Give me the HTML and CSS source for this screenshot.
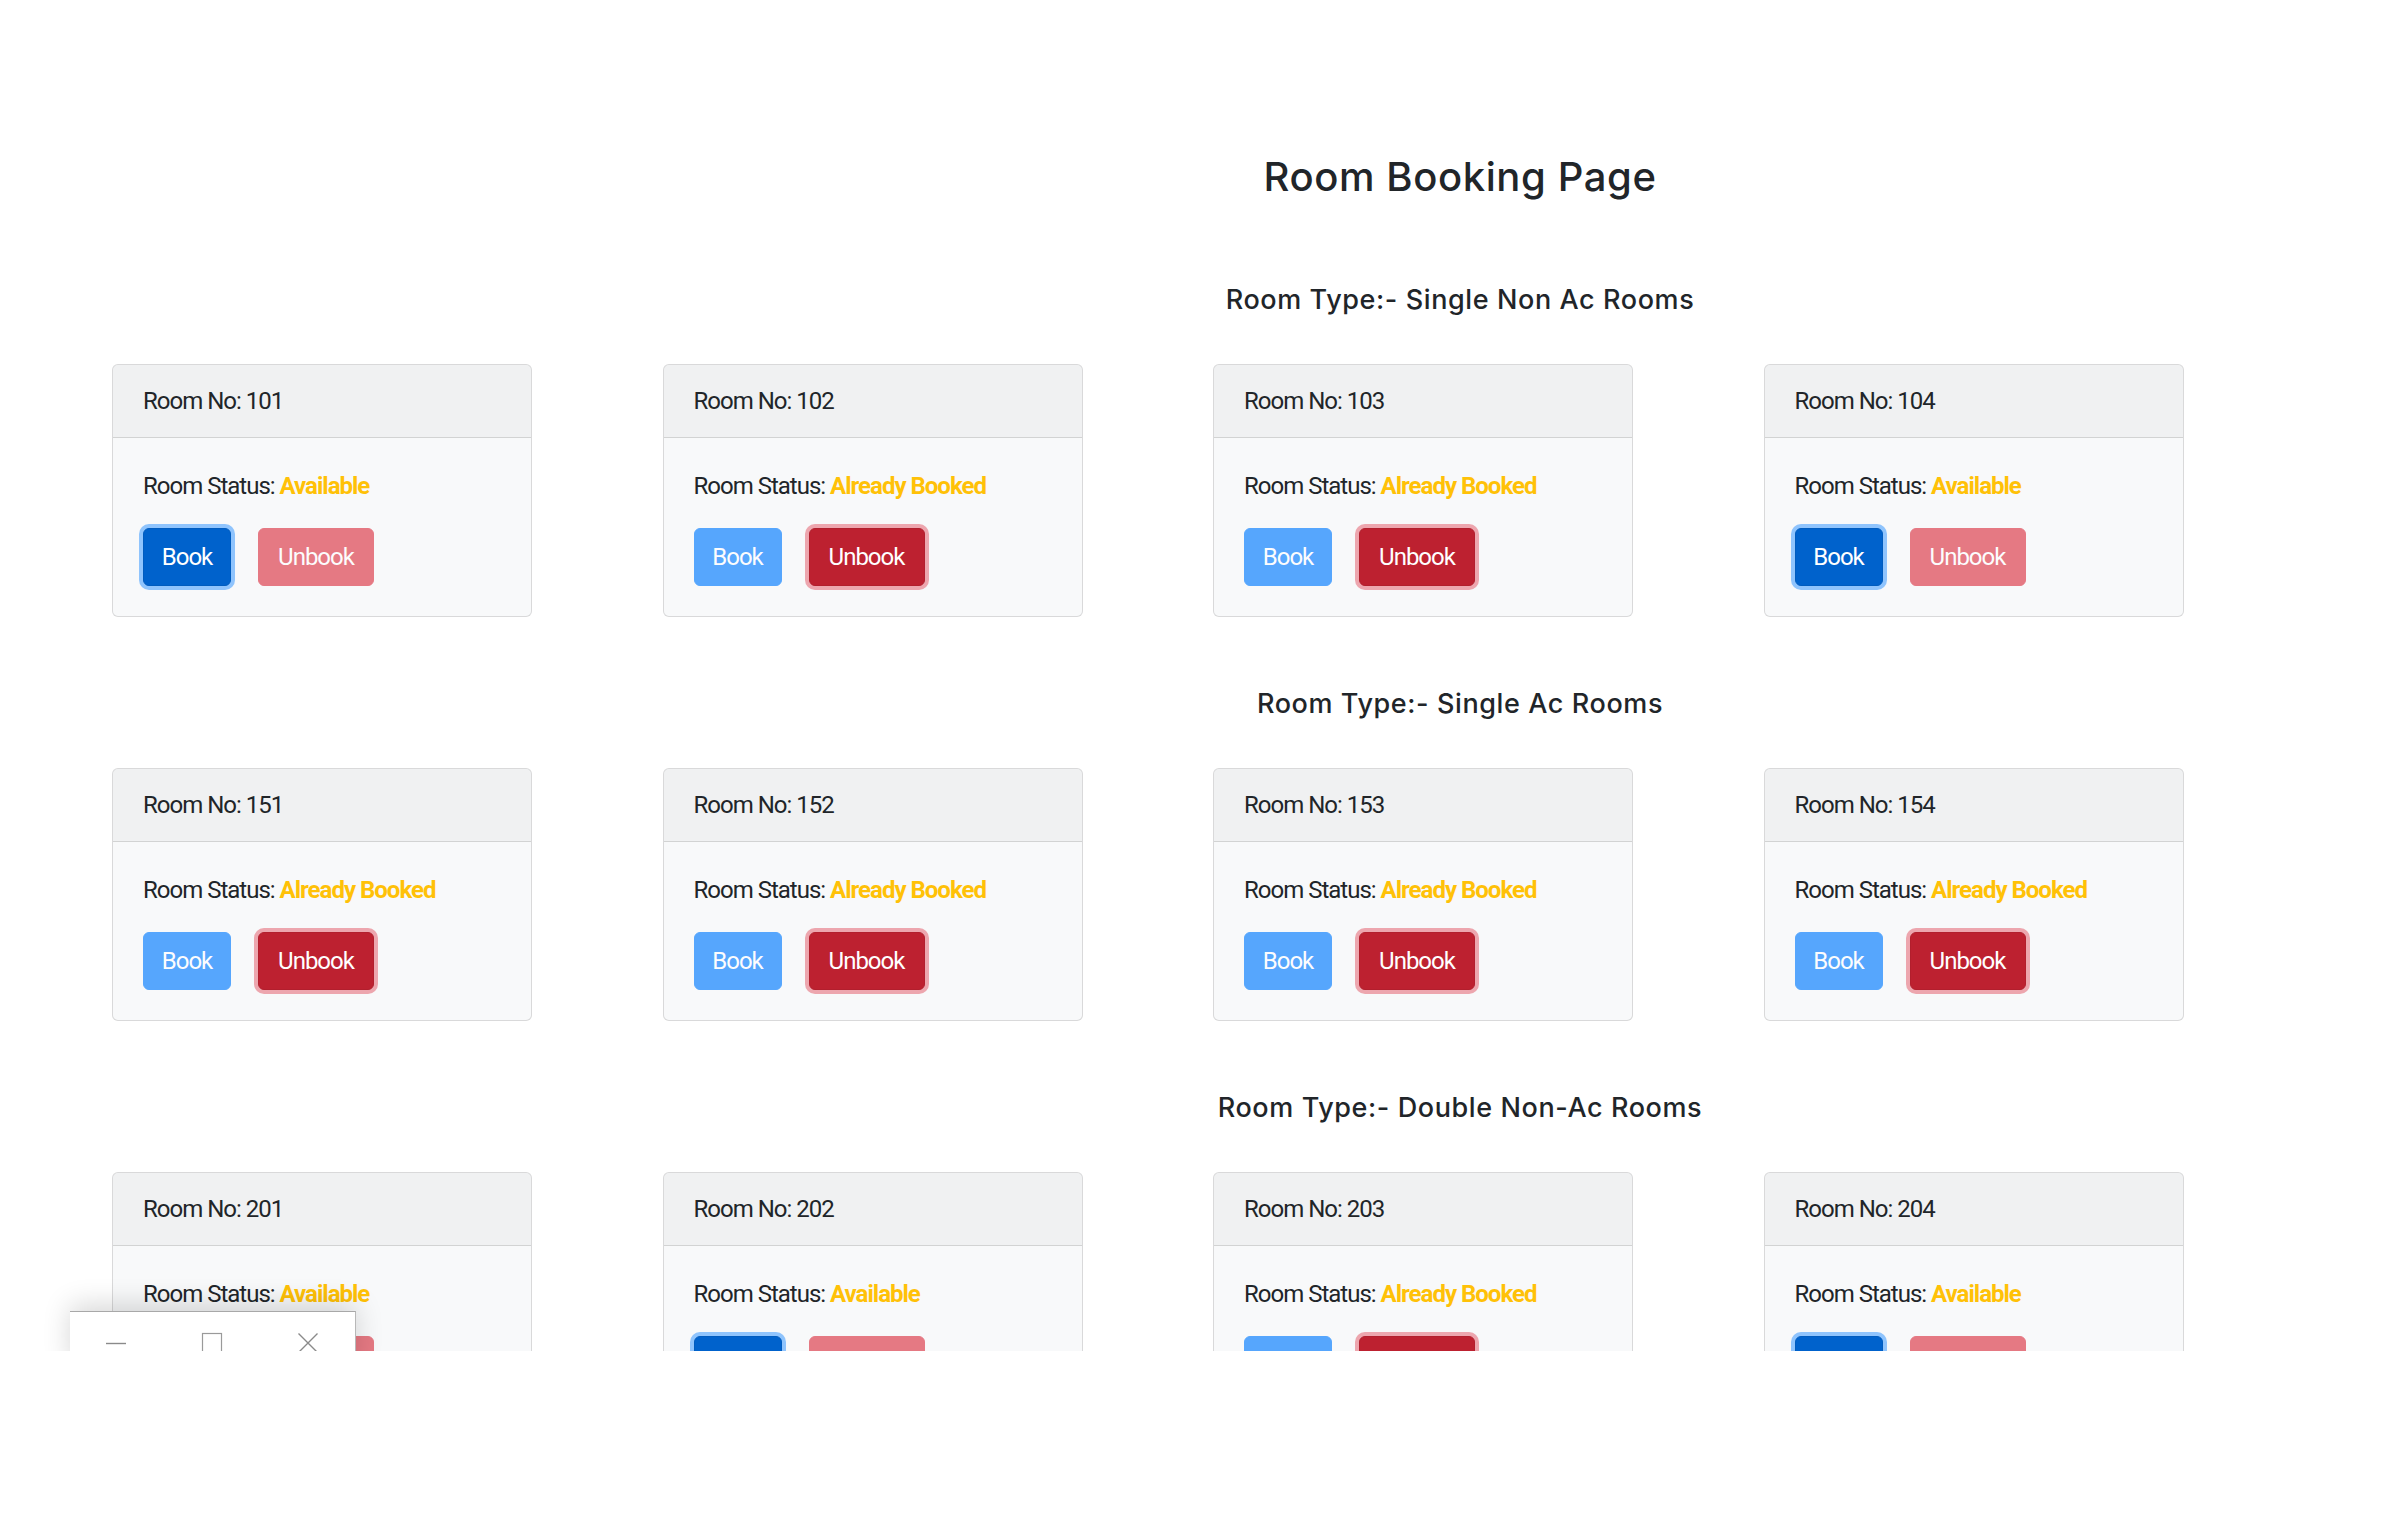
FILE: index.html
```html
<!DOCTYPE html>
<html lang="en">
<head>
<meta charset="utf-8">
<title>Room Booking Page</title>
<link rel="stylesheet" href="styles.css">
</head>
<body>
<div class="screen">
  <div class="page">
    <h2 class="title">Room Booking Page</h2>

    <section class="section">
      <h5 class="section-title">Room Type:- Single Non Ac Rooms</h5>
      <div class="rooms">
        <div class="card"><div class="card-header">Room No: 101</div><div class="card-body"><p class="status">Room Status: <b class="state">Available</b></p><div class="actions"><button class="btn btn-book is-active">Book</button><button class="btn btn-unbook is-disabled">Unbook</button></div></div></div>
        <div class="card"><div class="card-header">Room No: 102</div><div class="card-body"><p class="status">Room Status: <b class="state">Already Booked</b></p><div class="actions"><button class="btn btn-book is-disabled">Book</button><button class="btn btn-unbook is-active">Unbook</button></div></div></div>
        <div class="card"><div class="card-header">Room No: 103</div><div class="card-body"><p class="status">Room Status: <b class="state">Already Booked</b></p><div class="actions"><button class="btn btn-book is-disabled">Book</button><button class="btn btn-unbook is-active">Unbook</button></div></div></div>
        <div class="card"><div class="card-header">Room No: 104</div><div class="card-body"><p class="status">Room Status: <b class="state">Available</b></p><div class="actions"><button class="btn btn-book is-active">Book</button><button class="btn btn-unbook is-disabled">Unbook</button></div></div></div>
      </div>
    </section>

    <section class="section">
      <h5 class="section-title">Room Type:- Single Ac Rooms</h5>
      <div class="rooms">
        <div class="card"><div class="card-header">Room No: 151</div><div class="card-body"><p class="status">Room Status: <b class="state">Already Booked</b></p><div class="actions"><button class="btn btn-book is-disabled">Book</button><button class="btn btn-unbook is-active">Unbook</button></div></div></div>
        <div class="card"><div class="card-header">Room No: 152</div><div class="card-body"><p class="status">Room Status: <b class="state">Already Booked</b></p><div class="actions"><button class="btn btn-book is-disabled">Book</button><button class="btn btn-unbook is-active">Unbook</button></div></div></div>
        <div class="card"><div class="card-header">Room No: 153</div><div class="card-body"><p class="status">Room Status: <b class="state">Already Booked</b></p><div class="actions"><button class="btn btn-book is-disabled">Book</button><button class="btn btn-unbook is-active">Unbook</button></div></div></div>
        <div class="card"><div class="card-header">Room No: 154</div><div class="card-body"><p class="status">Room Status: <b class="state">Already Booked</b></p><div class="actions"><button class="btn btn-book is-disabled">Book</button><button class="btn btn-unbook is-active">Unbook</button></div></div></div>
      </div>
    </section>

    <section class="section">
      <h5 class="section-title">Room Type:- Double Non-Ac Rooms</h5>
      <div class="rooms">
        <div class="card"><div class="card-header">Room No: 201</div><div class="card-body"><p class="status">Room Status: <b class="state">Available</b></p><div class="actions"><button class="btn btn-book is-active">Book</button><button class="btn btn-unbook is-disabled">Unbook</button></div></div></div>
        <div class="card"><div class="card-header">Room No: 202</div><div class="card-body"><p class="status">Room Status: <b class="state">Available</b></p><div class="actions"><button class="btn btn-book is-active">Book</button><button class="btn btn-unbook is-disabled">Unbook</button></div></div></div>
        <div class="card"><div class="card-header">Room No: 203</div><div class="card-body"><p class="status">Room Status: <b class="state">Already Booked</b></p><div class="actions"><button class="btn btn-book is-disabled">Book</button><button class="btn btn-unbook is-active">Unbook</button></div></div></div>
        <div class="card"><div class="card-header">Room No: 204</div><div class="card-body"><p class="status">Room Status: <b class="state">Available</b></p><div class="actions"><button class="btn btn-book is-active">Book</button><button class="btn btn-unbook is-disabled">Unbook</button></div></div></div>
      </div>
    </section>
  </div>

  <div class="window-bar">
    <span class="win-btn"><svg width="22" height="22" viewBox="0 0 22 22"><line x1="1" y1="11.5" x2="21" y2="11.5" stroke="#8a8a8a" stroke-width="1.4"/></svg></span>
    <span class="win-btn"><svg width="22" height="22" viewBox="0 0 22 22"><rect x="1.5" y="1.5" width="19" height="19" fill="none" stroke="#9a9a9a" stroke-width="1.2"/></svg></span>
    <span class="win-btn"><svg width="22" height="22" viewBox="0 0 22 22"><path d="M1.5 1.5 L20.5 20.5 M20.5 1.5 L1.5 20.5" stroke="#8a8a8a" stroke-width="1.4" fill="none"/></svg></span>
  </div>
</div>
</body>
</html>
```

FILE: styles.css
```css
html, body {
  margin: 0;
  padding: 0;
  background: #ffffff;
}

.screen {
  position: relative;
  height: 1351px;
  overflow: hidden;
  background: #ffffff;
}

.page {
  width: 2920px;
  padding-top: 155px;
  color: #212529;
}

.title {
  margin: 0 0 87px;
  font-family: "Inter", "Noto Sans", sans-serif;
  font-weight: 500;
  font-size: 40px;
  letter-spacing: 0.6px;
  line-height: 43px;
  text-align: center;
  color: #212529;
}

.section + .section {
  margin-top: 72px;
}

.section-title {
  margin: 0 0 50px;
  font-family: "Inter", "Noto Sans", sans-serif;
  font-weight: 500;
  font-size: 27px;
  letter-spacing: 0.6px;
  line-height: 29px;
  text-align: center;
  color: #212529;
}

.rooms {
  display: grid;
  grid-template-columns: repeat(4, 420px);
  column-gap: 130.5px;
  padding-left: 112px;
}

.card {
  box-sizing: border-box;
  background: #f8f9fa;
  border: 1px solid rgba(0, 0, 0, 0.125);
  border-radius: 6px;
  font-family: "Roboto", "Liberation Sans", sans-serif;
  font-size: 24px;
  letter-spacing: -1px;
  line-height: 36px;
  color: #212529;
}

.card-header {
  padding: 18px 30px;
  background: rgba(0, 0, 0, 0.03);
  border-bottom: 1px solid rgba(0, 0, 0, 0.125);
  border-radius: 5px 5px 0 0;
}

.card-body {
  padding: 30px;
}

.status {
  margin: 0 0 24px;
}

.state {
  font-weight: 700;
  color: #ffc107;
}

.actions {
  display: flex;
  gap: 27px;
}

.btn {
  box-sizing: border-box;
  height: 58px;
  padding: 0;
  border: 1px solid transparent;
  border-radius: 6px;
  font-family: "Roboto", "Liberation Sans", sans-serif;
  font-size: 24px;
  letter-spacing: -1px;
  line-height: 56px;
  color: #ffffff;
  text-align: center;
}

.btn-book {
  width: 88px;
  background: #007bff;
  border-color: #007bff;
}

.btn-unbook {
  width: 116px;
  background: #dc3545;
  border-color: #dc3545;
}

.is-disabled {
  opacity: 0.65;
}

.btn-book.is-active {
  background: #0062cc;
  border-color: #005cbf;
  box-shadow: 0 0 0 4px rgba(38, 143, 255, 0.5);
}

.btn-unbook.is-active {
  background: #bd2130;
  border-color: #b21f2d;
  box-shadow: 0 0 0 4px rgba(225, 83, 97, 0.5);
}

.window-bar {
  position: absolute;
  left: 70px;
  top: 1311px;
  width: 286px;
  height: 60px;
  box-sizing: border-box;
  display: flex;
  align-items: flex-start;
  padding: 20px 0 0 35px;
  gap: 74px;
  background: #ffffff;
  border-top: 1px solid #a8a8a8;
  border-right: 1px solid #b8b8b8;
  box-shadow: 0 -6px 28px rgba(0, 0, 0, 0.16);
}

.win-btn {
  display: block;
  width: 22px;
  height: 22px;
}

.win-btn svg {
  display: block;
}
```
